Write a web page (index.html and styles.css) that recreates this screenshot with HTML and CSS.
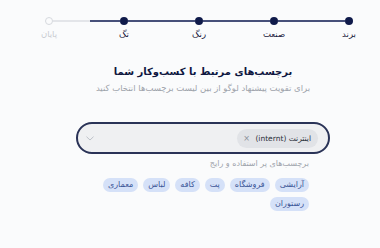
FILE: index.html
```html
<!DOCTYPE html>
<html lang="fa" dir="rtl">
<head>
<meta charset="utf-8">
<link rel="stylesheet" href="styles.css">
</head>
<body>
<div class="page">
  <div class="stepper">
    <div class="step done"><span class="dot"></span><span class="label">برند</span></div>
    <div class="bar"></div>
    <div class="step done"><span class="dot"></span><span class="label">صنعت</span></div>
    <div class="bar"></div>
    <div class="step done"><span class="dot"></span><span class="label">رنگ</span></div>
    <div class="bar"></div>
    <div class="step done"><span class="dot"></span><span class="label">تگ</span></div>
    <div class="bar half"></div>
    <div class="step todo"><span class="dot"></span><span class="label">پایان</span></div>
  </div>

  <div class="content">
    <h1 class="title">برچسب‌های مرتبط با کسب‌وکار شما</h1>
    <p class="subtitle">برای تقویت پیشنهاد لوگو از بین لیست برچسب‌ها انتخاب کنید</p>

    <div class="select">
      <span class="chip">اینترنت (internt) <span class="x">×</span></span>
      <svg class="chev" width="8" height="5" viewBox="0 0 8 5"><path d="M0.5 0.7 L4 4 L7.5 0.7" fill="none" stroke="#b7bcc4" stroke-width="0.9"/></svg>
    </div>

    <div class="popular">
      <p class="hint">برچسب‌های پر استفاده و رایج</p>
      <div class="tags">
        <span class="tag">آرایشی</span>
        <span class="tag">فروشگاه</span>
        <span class="tag">پت</span>
        <span class="tag">کافه</span>
        <span class="tag">لباس</span>
        <span class="tag">معماری</span>
        <span class="tag">رستوران</span>
      </div>
    </div>
  </div>
</div>
</body>
</html>
```
FILE: styles.css
```css
* { box-sizing: border-box; }
html, body { margin: 0; }
body {
  background: #fafbfc;
  font-family: "DejaVu Sans", sans-serif;
  color: #111a3f;
  width: 380px;
  height: 248px;
  overflow: hidden;
}
.page {
  padding: 17px 16px 0 34px;
}
.stepper {
  display: flex;
  align-items: flex-start;
}
.step {
  width: 30px;
  display: flex;
  flex-direction: column;
  align-items: center;
  position: relative;
  z-index: 1;
}
.dot {
  width: 8px;
  height: 8px;
  border-radius: 50%;
  background: #0f1a4a;
}
.todo .dot {
  width: 8px;
  height: 8px;
  background: #fafbfc;
  border: 1.2px solid #d6d9de;
}
.label {
  margin-top: 4px;
  font-size: 8.5px;
  line-height: 11px;
  color: #1a2140;
  white-space: nowrap;
}
.todo .label { color: #c9ccd2; }
.bar {
  flex: 1;
  height: 1.6px;
  margin: 3.2px -11px 0;
  background: #46507a;
}
.bar.half {
  background: linear-gradient(to left, #46507a 0 45%, #e3e5e9 45% 100%);
}
.content {
  margin: 0 34px 0 42px;
  width: 254px;
}
.title {
  margin: 25px 0 0;
  font-size: 10px;
  line-height: 14px;
  font-weight: bold;
  text-align: center;
  color: #0e1640;
}
.subtitle {
  margin: 3px 0 0;
  font-size: 8.5px;
  line-height: 12px;
  text-align: center;
  color: #9ea3ab;
}
.select {
  margin-top: 28px;
  height: 32px;
  border: 2px solid #2a3357;
  border-radius: 16px;
  background: #eff0f2;
  display: flex;
  align-items: center;
  padding: 0 10px 0 8px;
  justify-content: space-between;
}
.chip {
  height: 19px;
  padding: 0 7px 0 6px;
  border-radius: 10px;
  background: #e1e3e7;
  font-size: 7.5px;
  line-height: 19px;
  color: #2a2f3a;
  white-space: nowrap;
}
.chip .x { color: #8a8f98; font-size: 8px; margin-right: 3px; }
.chev { display: block; }
.popular {
  padding: 0 21px 0 10px;
}
.hint {
  margin: 4px 0 0;
  font-size: 8px;
  line-height: 12px;
  color: #9ea3ab;
}
.tags {
  margin-top: 8px;
  display: flex;
  flex-wrap: wrap;
  gap: 5px 5px;
}
.tag {
  height: 14px;
  padding: 0 5px;
  border-radius: 7px;
  background: #d5e1f8;
  color: #3a5496;
  font-size: 8px;
  line-height: 14px;
  white-space: nowrap;
}
```
